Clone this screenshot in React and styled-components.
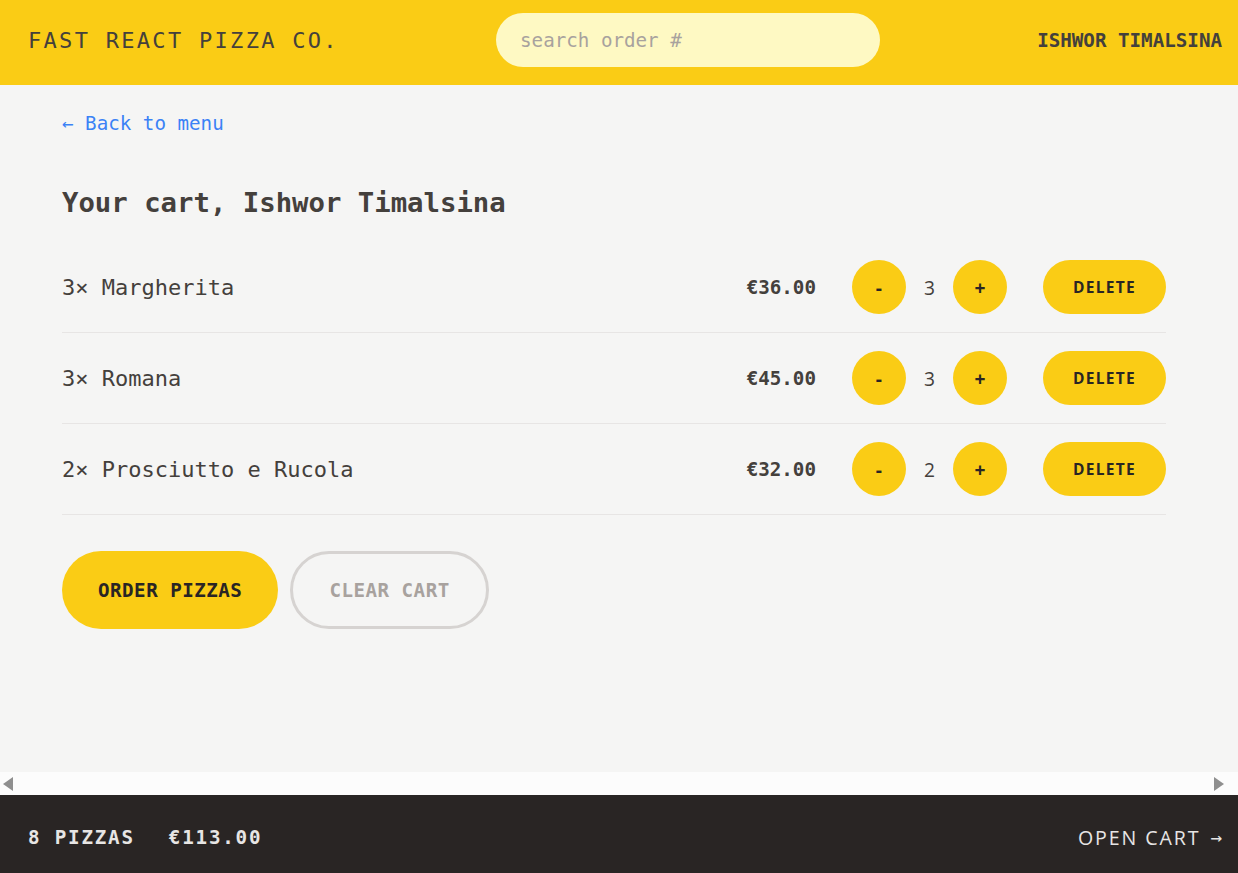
import React from "react";
import styled, { createGlobalStyle } from "styled-components";

const GlobalStyle = createGlobalStyle`
  html, body {
    margin: 0;
    padding: 0;
  }
  body {
    font-family: "DejaVu Sans Mono", "Liberation Mono", monospace;
    color: #44403c;
  }
  * {
    box-sizing: border-box;
  }
`;

const Shell = styled.div`
  display: grid;
  grid-template-rows: auto 1fr auto auto;
  height: 100vh;
  background: #f5f5f4;
`;

const Header = styled.header`
  height: 85px;
  display: flex;
  align-items: center;
  justify-content: space-between;
  padding: 0 16px 5px 28px;
  background: #facc15;
  text-transform: uppercase;
`;

const Logo = styled.a`
  font-size: 22px;
  letter-spacing: 2.3px;
  color: #44403c;
  text-decoration: none;
`;

const SearchInput = styled.input`
  width: 384px;
  height: 54px;
  border: none;
  outline: none;
  border-radius: 9999px;
  background: #fef9c3;
  padding: 0 24px;
  font-family: inherit;
  font-size: 19.2px;
  color: #44403c;

  &::placeholder {
    color: #a8a29e;
  }
`;

const UserName = styled.div`
  font-size: 19.2px;
  font-weight: 700;
`;

const Main = styled.main`
  overflow: hidden;
  padding: 25px 72px 0 62px;
`;

const BackLink = styled.a`
  display: inline-block;
  font-size: 19.2px;
  line-height: 28px;
  color: #3b82f6;
  text-decoration: none;
`;

const Title = styled.h2`
  margin: 47px 0 21px;
  font-size: 27.3px;
  line-height: 36px;
  font-weight: 700;
`;

const List = styled.ul`
  list-style: none;
  margin: 0;
  padding: 0;
`;

const Item = styled.li`
  display: flex;
  align-items: center;
  justify-content: space-between;
  padding: 18px 0;
  border-bottom: 1px solid #e7e5e4;
`;

const ItemName = styled.p`
  margin: 0;
  font-size: 22px;
`;

const Actions = styled.div`
  display: flex;
  align-items: center;
  gap: 36px;
`;

const Price = styled.p`
  margin: 0;
  font-size: 19.2px;
  font-weight: 700;
`;

const QtyGroup = styled.div`
  display: flex;
  align-items: center;
  gap: 18px;
`;

const RoundButton = styled.button`
  width: 54px;
  height: 54px;
  border: none;
  border-radius: 50%;
  background: #facc15;
  color: #292524;
  font-family: "Open Sans", sans-serif;
  font-size: 19.2px;
  font-weight: 700;
  cursor: pointer;
`;

const Qty = styled.span`
  font-family: "Open Sans", sans-serif;
  font-size: 19.2px;
`;

const DeleteButton = styled.button`
  height: 54px;
  padding: 0 30px;
  border: none;
  border-radius: 9999px;
  background: #facc15;
  color: #292524;
  font-family: "Open Sans", sans-serif;
  font-size: 15.5px;
  font-weight: 700;
  letter-spacing: 1.3px;
  text-transform: uppercase;
  cursor: pointer;
`;

const CartButtons = styled.div`
  display: flex;
  gap: 12px;
  margin-top: 36px;
`;

const BigButton = styled.button`
  height: 78px;
  padding: 0 36px;
  border-radius: 9999px;
  font-family: inherit;
  font-size: 19.2px;
  font-weight: 700;
  letter-spacing: 0.48px;
  text-transform: uppercase;
  cursor: pointer;
  border: ${(p) => (p.$secondary ? "3px solid #d6d3d1" : "none")};
  background: ${(p) => (p.$secondary ? "transparent" : "#facc15")};
  color: ${(p) => (p.$secondary ? "#a8a29e" : "#292524")};
`;

const ScrollTrack = styled.div`
  height: 23px;
  display: flex;
  align-items: center;
  justify-content: space-between;
  padding: 0 14px 0 3px;
  background: #fcfcfc;
`;

const Arrow = styled.span`
  width: 0;
  height: 0;
  border-top: 7px solid transparent;
  border-bottom: 7px solid transparent;
  ${(p) =>
    p.$right
      ? "border-left: 10px solid #8f8f8f;"
      : "border-right: 10px solid #8f8f8f;"}
`;

const Footer = styled.footer`
  height: 78px;
  display: flex;
  align-items: center;
  justify-content: space-between;
  padding: 6px 16px 0 28px;
  background: #292524;
  color: #e7e5e4;
  text-transform: uppercase;
`;

const Summary = styled.p`
  margin: 0;
  display: flex;
  gap: 34px;
  font-size: 19.2px;
  font-weight: 700;
  letter-spacing: 1.8px;
`;

const OpenCart = styled.a`
  display: flex;
  align-items: center;
  font-family: "Open Sans", sans-serif;
  font-size: 19.6px;
  letter-spacing: 1.9px;
  color: #e7e5e4;
  text-decoration: none;
`;

const LinkArrow = styled.span`
  margin-left: 10px;
  font-family: "DejaVu Sans Mono", monospace;
  font-size: 19.2px;
  letter-spacing: 0;
`;

const cart = [
  { id: 1, name: "Margherita", quantity: 3, total: 36 },
  { id: 2, name: "Romana", quantity: 3, total: 45 },
  { id: 3, name: "Prosciutto e Rucola", quantity: 2, total: 32 },
];

const euro = (n) => `€${n.toFixed(2)}`;

export default function App() {
  const pizzas = cart.reduce((s, i) => s + i.quantity, 0);
  const total = cart.reduce((s, i) => s + i.total, 0);

  return (
    <>
      <GlobalStyle />
      <Shell>
        <Header>
          <Logo href="#">Fast React Pizza Co.</Logo>
          <SearchInput placeholder="search order #" />
          <UserName>Ishwor Timalsina</UserName>
        </Header>

        <Main>
          <BackLink href="#">&larr; Back to menu</BackLink>
          <Title>Your cart, Ishwor Timalsina</Title>
          <List>
            {cart.map((item) => (
              <Item key={item.id}>
                <ItemName>
                  {item.quantity}&times; {item.name}
                </ItemName>
                <Actions>
                  <Price>{euro(item.total)}</Price>
                  <QtyGroup>
                    <RoundButton>-</RoundButton>
                    <Qty>{item.quantity}</Qty>
                    <RoundButton>+</RoundButton>
                  </QtyGroup>
                  <DeleteButton>Delete</DeleteButton>
                </Actions>
              </Item>
            ))}
          </List>
          <CartButtons>
            <BigButton>Order pizzas</BigButton>
            <BigButton $secondary>Clear cart</BigButton>
          </CartButtons>
        </Main>

        <ScrollTrack>
          <Arrow />
          <Arrow $right />
        </ScrollTrack>

        <Footer>
          <Summary>
            <span>{pizzas} pizzas</span>
            <span>{euro(total)}</span>
          </Summary>
          <OpenCart href="#">
            Open cart<LinkArrow>&rarr;</LinkArrow>
          </OpenCart>
        </Footer>
      </Shell>
    </>
  );
}
